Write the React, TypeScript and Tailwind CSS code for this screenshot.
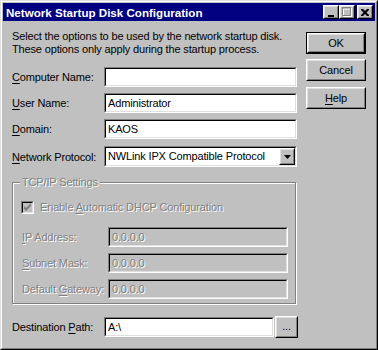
import React from 'react';

const font = "font-['Liberation_Sans',Arial,sans-serif]";
const dim = 'text-[#808080] [text-shadow:1px_1px_0_#fff]';

const Raised = ({ children, className = '' }: { children?: React.ReactNode; className?: string }) => (
  <div className={`border border-t-white border-l-white border-r-black border-b-black bg-[#c0c0c0] ${className}`}>
    <div className="flex h-full w-full items-center justify-center border border-t-[#dfdfdf] border-l-[#dfdfdf] border-r-[#808080] border-b-[#808080]">
      {children}
    </div>
  </div>
);

const Sunken = ({ children, className = '', disabled = false }: { children?: React.ReactNode; className?: string; disabled?: boolean }) => (
  <div className={`border border-t-[#808080] border-l-[#808080] border-r-white border-b-white ${className}`}>
    <div
      className={`flex h-full w-full items-center border border-t-black border-l-black border-r-[#dfdfdf] border-b-[#dfdfdf] ${
        disabled ? 'bg-[#c0c0c0]' : 'bg-white'
      }`}
    >
      {children}
    </div>
  </div>
);

const Field = ({ u, rest, value }: { u: string; rest: string; value: string }) => (
  <div className="flex items-center">
    <span className="w-[92px] pt-[1px]">
      <span className="underline underline-offset-2">{u}</span>
      {rest}
    </span>
    <Sunken className="h-[20px] w-[193px]">
      <span className="pl-[2px]">{value}</span>
    </Sunken>
  </div>
);

const IpField = ({ pre, u, rest }: { pre: string; u: string; rest: string }) => (
  <div className="flex items-center pl-[9px]">
    <span className={`w-[86px] ${dim}`}>
      {pre}
      <span className="underline underline-offset-2">{u}</span>
      {rest}
    </span>
    <Sunken disabled className="h-[20px] w-[180px]">
      <span className={`pl-[2px] ${dim}`}>0.0.0.0</span>
    </Sunken>
  </div>
);

export default function App() {
  return (
    <div className={`${font} h-[350px] w-[378px] border border-t-[#dfdfdf] border-l-[#dfdfdf] border-r-black border-b-black bg-[#c0c0c0] text-[11px] leading-[13px] tracking-[-0.15px] text-black`}>
      <div className="flex h-full flex-col border border-t-white border-l-white border-r-[#808080] border-b-[#808080] p-[1px]">
        {/* title bar */}
        <div className="flex h-[18px] items-center bg-[#000080] pl-[3px] pr-[2px]">
          <span className="flex-1 text-[11.6px] font-bold tracking-normal text-white">Network Startup Disk Configuration</span>
          <Raised className="h-[14px] w-[16px]">
            <svg width="8" height="8" viewBox="0 0 8 8" className="mt-[1px]">
              <rect x="1" y="6" width="6" height="2" fill="#000" />
            </svg>
          </Raised>
          <Raised className="h-[14px] w-[16px]">
            <svg width="10" height="10" viewBox="0 0 10 10">
              <path d="M1.5 1.5h8v8h-8z M1 2h9" stroke="#fff" fill="none" />
              <path d="M0.5 0.5h8v8h-8z M0 1h9" stroke="#808080" fill="none" />
            </svg>
          </Raised>
          <Raised className="ml-[2px] h-[14px] w-[16px]">
            <svg width="8" height="7" viewBox="0 0 8 7">
              <path d="M0 0h2l2 2 2-2h2v1l-2.5 2.5L8 6v1H6L4 5 2 7H0V6l2.5-2.5L0 1z" fill="#000" />
            </svg>
          </Raised>
        </div>

        {/* body */}
        <div className="flex pl-[9px]">
          <div className="flex w-[286px] flex-col pt-[9px]">
            <p>
              Select the options to be used by the network startup disk.
              <br />
              These options only apply during the startup process.
            </p>

            <div className="mt-[11px] flex flex-col gap-[6px]">
              <Field u="C" rest="omputer Name:" value="" />
              <Field u="U" rest="ser Name:" value="Administrator" />
              <Field u="D" rest="omain:" value="KAOS" />
            </div>

            <div className="mt-[7px] flex items-center">
              <span className="w-[92px] pt-[1px]">
                <span className="underline underline-offset-2">N</span>etwork Protocol:
              </span>
              <Sunken className="h-[21px] w-[193px]">
                <span className="flex-1 pl-[2px]">NWLink IPX Compatible Protocol</span>
                <Raised className="h-[17px] w-[16px]">
                  <svg width="7" height="4" viewBox="0 0 7 4">
                    <path d="M0 0h7L3.5 4z" fill="#000" />
                  </svg>
                </Raised>
              </Sunken>
            </div>

            {/* TCP/IP group */}
            <div className="relative mt-[15px] h-[122px] w-[284px] border border-[#808080] shadow-[inset_1px_1px_0_#fff,1px_1px_0_#fff]">
              <span className={`absolute -top-[7px] left-[7px] bg-[#c0c0c0] px-[2px] ${dim}`}>TCP/IP Settings</span>
              <div className="flex items-center pl-[8px] pt-[18px]">
                <div className="h-[13px] w-[13px] border border-t-[#808080] border-l-[#808080] border-r-white border-b-white">
                  <div className="flex h-full w-full items-center justify-center border border-t-black border-l-black border-r-[#dfdfdf] border-b-[#dfdfdf] bg-[#c0c0c0]">
                    <svg width="7" height="7" viewBox="0 0 7 7">
                      <path d="M0 2v3l2 2 5-5V-1L2 4z" fill="#808080" />
                    </svg>
                  </div>
                </div>
                <span className={`ml-[6px] ${dim}`}>
                  Enable <span className="underline underline-offset-2">A</span>utomatic DHCP Configuration
                </span>
              </div>
              <div className="mt-[13px] flex flex-col gap-[6px]">
                <IpField pre="" u="I" rest="P Address:" />
                <IpField pre="" u="S" rest="ubnet Mask:" />
                <IpField pre="Default " u="G" rest="ateway:" />
              </div>
            </div>

            <div className="mt-[12px] flex items-center">
              <span className="w-[92px] pt-[1px]">
                Destination <span className="underline underline-offset-2">P</span>ath:
              </span>
              <Sunken className="h-[20px] w-[170px]">
                <span className="pl-[2px]">A:\</span>
              </Sunken>
              <Raised className="ml-[1px] h-[22px] w-[23px]">
                <span className="pb-[2px]">...</span>
              </Raised>
            </div>
          </div>

          {/* buttons */}
          <div className="ml-[8px] flex w-[60px] flex-col pt-[11px]">
            <div className="h-[22px] border border-black">
              <Raised className="h-full w-full">OK</Raised>
            </div>
            <Raised className="mt-[5px] h-[22px] w-full">Cancel</Raised>
            <Raised className="mt-[6px] h-[22px] w-full">
              <span>
                <span className="underline underline-offset-2">H</span>elp
              </span>
            </Raised>
          </div>
        </div>
      </div>
    </div>
  );
}
